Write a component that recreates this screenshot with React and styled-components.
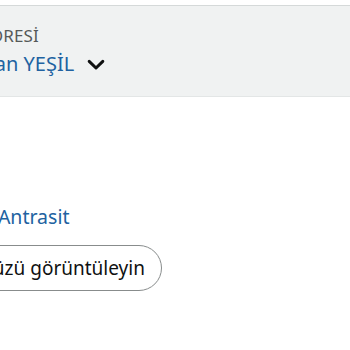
import React from 'react';
import styled, { createGlobalStyle } from 'styled-components';

const Global = createGlobalStyle`
  html, body {
    margin: 0;
    padding: 0;
    background: #ffffff;
    overflow: hidden;
  }
  body {
    font-family: "Noto Sans", "Liberation Sans", Arial, sans-serif;
    color: #0f1111;
  }
`;

const Page = styled.div`
  width: 350px;
  height: 350px;
  overflow: hidden;
  padding-top: 5px;
  box-sizing: border-box;
`;

const AddressBar = styled.div`
  background: #f0f2f2;
  border-top: 1px solid #d5d9d9;
  border-bottom: 1px solid #e3e6e6;
  height: 92px;
  box-sizing: border-box;
  padding-top: 19px;
`;

const Shifted = styled.div`
  margin-left: ${p => p.shift}px;
  white-space: nowrap;
`;

const Label = styled.div`
  font-size: 17px;
  line-height: 22px;
  color: #565959;
  letter-spacing: 0.1px;
`;

const NameRow = styled.div`
  display: flex;
  align-items: center;
  gap: 13px;
  margin-top: 4px;
  font-size: 20px;
  line-height: 26px;
  color: #2162a1;
`;

const Chevron = () => (
  <svg width="18" height="12" viewBox="0 0 18 12" style={{ marginTop: 2 }}>
    <path d="M2.2 2.4 L9 9 L15.8 2.4" fill="none" stroke="#0f1111" strokeWidth="3" strokeLinecap="round" strokeLinejoin="round" />
  </svg>
);

const Body = styled.div`
  padding-top: 107px;
`;

const Link = styled.a`
  display: block;
  font-size: 19.5px;
  line-height: 26px;
  color: #2162a1;
  text-decoration: none;
`;

const PillButton = styled.button`
  margin-top: 15px;
  height: 46px;
  padding: 0 16px 0 20px;
  border: 1px solid #888c8c;
  border-radius: 23px;
  background: #ffffff;
  font-family: inherit;
  font-size: 19px;
  color: #0f1111;
  white-space: nowrap;
`;

export default function App() {
  return (
    <Page>
      <Global />
      <AddressBar>
        <Shifted shift={-103}>
          <Label>TESLİMAT ADRESİ</Label>
        </Shifted>
        <Shifted shift={-42}>
          <NameRow>
            <span>Hakan YEŞİL</span>
            <Chevron />
          </NameRow>
        </Shifted>
      </AddressBar>
      <Body>
        <Shifted shift={-58}>
          <Link href="#">Renk: Antrasit</Link>
        </Shifted>
        <Shifted shift={-88}>
          <PillButton>Ürün yüzü görüntüleyin</PillButton>
        </Shifted>
      </Body>
    </Page>
  );
}
